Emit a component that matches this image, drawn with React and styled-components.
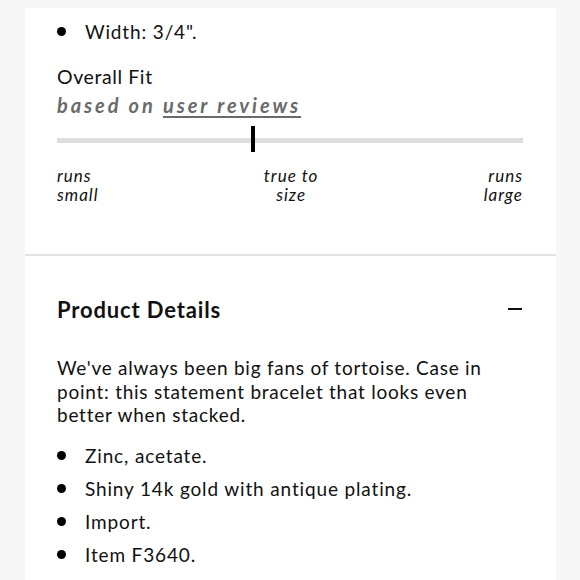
import React from 'react';
import styled, { createGlobalStyle } from 'styled-components';

const GlobalStyle = createGlobalStyle`
  html, body {
    margin: 0;
    padding: 0;
    background: #f7f7f7;
    font-family: Lato, "Open Sans", sans-serif;
    color: #111;
  }
`;

const Page = styled.div`
  width: 580px;
  height: 580px;
  overflow: hidden;
  padding: 8px 24px 0 25px;
  box-sizing: border-box;
`;

const Card = styled.div`
  background: #fff;
  width: 531px;
  min-height: 600px;
`;

const Section = styled.section`
  padding: 0 33px 0 32px;
  border-bottom: ${p => (p.$divider ? '2px solid #e3e3e3' : 'none')};
`;

const List = styled.ul`
  list-style: none;
  margin: 0;
  padding: 0;
`;

const Item = styled.li`
  display: flex;
  align-items: center;
  font-size: 19px;
  letter-spacing: 0.85px;
  height: ${p => p.$h || 33}px;
  &::before {
    content: '';
    width: 9px;
    height: 9px;
    border-radius: 50%;
    background: #000;
    margin-right: 19px;
    flex-shrink: 0;
  }
`;

const FitTitle = styled.div`
  font-size: 19.5px;
  letter-spacing: 0.6px;
  line-height: 28px;
  margin-top: 9px;
`;

const FitSub = styled.div`
  font-size: 20px;
  font-weight: 700;
  font-style: italic;
  color: #6a6a6a;
  letter-spacing: 2.9px;
  line-height: 28px;

  span {
    text-decoration: underline;
    text-underline-offset: 3px;
    text-decoration-thickness: 1.5px;
  }
`;

const Track = styled.div`
  position: relative;
  height: 5px;
  background: #dedede;
  margin-top: 19px;
`;

const Marker = styled.div`
  position: absolute;
  top: -12px;
  width: 4px;
  height: 26px;
  background: #000;
`;

const Labels = styled.div`
  display: flex;
  justify-content: space-between;
  margin-top: 23px;
  padding-bottom: 50px;
`;

const Label = styled.div`
  font-style: italic;
  font-size: 17px;
  line-height: 19px;
  letter-spacing: 1px;
  text-align: ${p => p.$align};
`;

const Header = styled.div`
  display: flex;
  align-items: center;
  justify-content: space-between;
  margin-top: 38px;
  height: 30px;
`;

const Heading = styled.h2`
  margin: 0;
  font-size: 22px;
  letter-spacing: 0.85px;
  font-weight: 700;
`;

const Minus = styled.div`
  width: 14px;
  height: 2px;
  background: #111;
  margin-right: 1px;
`;

const Text = styled.p`
  margin: 32px 0 12px;
  font-size: 19px;
  letter-spacing: 0.75px;
  line-height: 23.5px;
  max-width: 445px;
`;

export default function App() {
  return (
    <>
      <GlobalStyle />
      <Page>
        <Card>
          <Section $divider>
            <List>
              <Item $h={46}>Width: 3/4".</Item>
            </List>
            <FitTitle>Overall Fit</FitTitle>
            <FitSub>
              based on <span>user reviews</span>
            </FitSub>
            <Track>
              <Marker style={{ left: `${(194 / 466) * 100}%` }} />
            </Track>
            <Labels>
              <Label $align="left">runs<br />small</Label>
              <Label $align="center">true to<br />size</Label>
              <Label $align="right">runs<br />large</Label>
            </Labels>
          </Section>
          <Section>
            <Header>
              <Heading>Product Details</Heading>
              <Minus />
            </Header>
            <Text>
              We've always been big fans of tortoise. Case in point: this statement bracelet that looks even better when stacked.
            </Text>
            <List>
              <Item>Zinc, acetate.</Item>
              <Item>Shiny 14k gold with antique plating.</Item>
              <Item>Import.</Item>
              <Item>Item F3640.</Item>
            </List>
          </Section>
        </Card>
      </Page>
    </>
  );
}
